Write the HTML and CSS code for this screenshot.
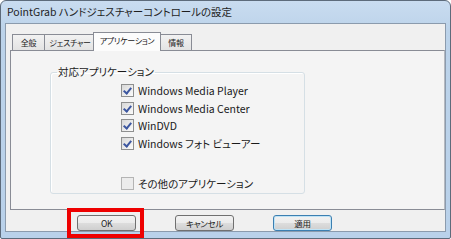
FILE: index.html
```html
<!DOCTYPE html>
<html lang="ja">
<head>
<meta charset="utf-8">
<link rel="stylesheet" href="styles.css">
</head>
<body>
<div class="window">
  <div class="titlebar">PointGrab ハンドジェスチャーコントロールの設定</div>
  <div class="client">
    <div class="tabs">
      <div class="tab t1">全般</div>
      <div class="tab t2">ジェスチャー</div>
      <div class="tab active">アプリケーション</div>
      <div class="tab t4">情報</div>
    </div>
    <div class="panel">
      <fieldset class="group">
        <legend class="group-label">対応アプリケーション</legend>
        <div class="list">
          <div class="row"><span class="cb checked"></span><span class="lbl">Windows Media Player</span></div>
          <div class="row"><span class="cb checked"></span><span class="lbl">Windows Media Center</span></div>
          <div class="row"><span class="cb checked"></span><span class="lbl">WinDVD</span></div>
          <div class="row"><span class="cb checked"></span><span class="lbl">Windows フォト ビューアー</span></div>
          <div class="row other"><span class="cb"></span><span class="lbl">その他のアプリケーション</span></div>
        </div>
      </fieldset>
    </div>
    <div class="buttons">
      <span class="highlight"><span class="btn">OK</span></span>
      <span class="btn">キャンセル</span>
      <span class="btn default">適用</span>
    </div>
  </div>
</div>
</body>
</html>
```

FILE: styles.css
```css
html, body {
  margin: 0;
  padding: 0;
  width: 451px;
  height: 239px;
  overflow: hidden;
  background: #ffffff;
}
.window {
  box-sizing: border-box;
  width: 451px;
  height: 239px;
  border: 1px solid #5d6b7b;
  border-radius: 6px 6px 2px 2px;
  background: linear-gradient(to bottom, #c9dcf0 0px, #bcd3ea 30px, #b9d1ea 100%);
  font-family: "Noto Sans CJK JP", sans-serif;
  font-feature-settings: "palt";
  color: #000;
  padding: 0 4px 0 4px;
}
.titlebar {
  height: 22px;
  line-height: 22px;
  padding-left: 2px;
  font-size: 10.5px;
  color: #1e1e1e;
  white-space: nowrap;
}
.client {
  box-sizing: border-box;
  height: 209px;
  background: #f0f0f0;
  border: 1px solid #8b9bad;
  padding: 8px 0 0 4px;
  display: flex;
  flex-direction: column;
}
.tabs {
  display: flex;
  align-items: flex-end;
  height: 18px;
  padding-left: 2px;
  position: relative;
  z-index: 1;
}
.tab {
  box-sizing: border-box;
  height: 16px;
  border: 1px solid #898c95;
  border-bottom: none;
  background: linear-gradient(to bottom, #f2f2f2, #e3e3e3);
  font-size: 8px;
  letter-spacing: -0.3px;
  line-height: 15px;
  text-align: center;
  margin-right: -1px;
  white-space: nowrap;
  color: #1a1a1a;
}
.t1 { width: 33px; }
.t2 { width: 52px; }
.t4 { width: 32px; }
.tab.active {
  width: 68px;
  height: 19px;
  margin: 0 -2px -1px -2px;
  background: #fcfcfc;
  line-height: 16px;
  position: relative;
  z-index: 2;
}
.tab.active + .tab { margin-left: 1px; }
.panel {
  box-sizing: border-box;
  height: 160px;
  border: 1px solid #898c95;
  border-right-color: #b5b9c0;
  background: #f4f4f4;
  padding: 14px 0 0 39px;
}
.group {
  box-sizing: border-box;
  width: 255px;
  height: 129px;
  margin: 0;
  padding: 0 0 0 70px;
  border: 1px solid #d5dfe5;
  border-radius: 3px;
  box-shadow: inset 1px 1px 0 #fff;
}
.group-label {
  margin-left: -64px;
  padding: 0 1px;
  font-size: 10.5px;
  line-height: 14px;
  color: #1a1a1a;
}
.list {
  display: flex;
  flex-direction: column;
  padding-top: 3px;
}
.row {
  display: flex;
  align-items: center;
  height: 17.5px;
  font-size: 10.5px;
  white-space: nowrap;
}
.row.other { margin-top: 22.5px; }
.cb {
  box-sizing: border-box;
  width: 13px;
  height: 13px;
  border: 1px solid #8e8f8f;
  background: linear-gradient(135deg, #d8d8d8, #fbfbfb);
  margin-right: 4px;
  flex: none;
  position: relative;
}
.cb.checked::after {
  content: "";
  position: absolute;
  left: 3px;
  top: 1px;
  width: 3px;
  height: 6px;
  border: solid #3d57a0;
  border-width: 0 2px 2px 0;
  transform: rotate(40deg);
}
.row.other .cb { border-color: #b4b4b4; background: #ececec; }
.lbl { color: #1a1a1a; }
.buttons {
  flex: 1;
  display: flex;
  align-items: flex-start;
  gap: 39px;
  padding: 5px 0 0 67px;
}
.btn {
  box-sizing: border-box;
  display: block;
  width: 59px;
  height: 16px;
  border: 1px solid #707070;
  border-radius: 3px;
  background: linear-gradient(to bottom, #f2f2f2 0%, #ebebeb 50%, #dddddd 51%, #cfcfcf 100%);
  font-size: 8.5px;
  letter-spacing: -0.3px;
  line-height: 14px;
  text-align: center;
  color: #1a1a1a;
}
.btn.default {
  border-color: #3c7fb1;
  box-shadow: inset 0 0 0 1px #bfe3f6;
}
.highlight {
  position: relative;
  display: block;
}
.highlight::after {
  content: "";
  position: absolute;
  left: -10px;
  right: -8px;
  top: -7px;
  bottom: -7px;
  border: 4px solid #ee0000;
}
```
